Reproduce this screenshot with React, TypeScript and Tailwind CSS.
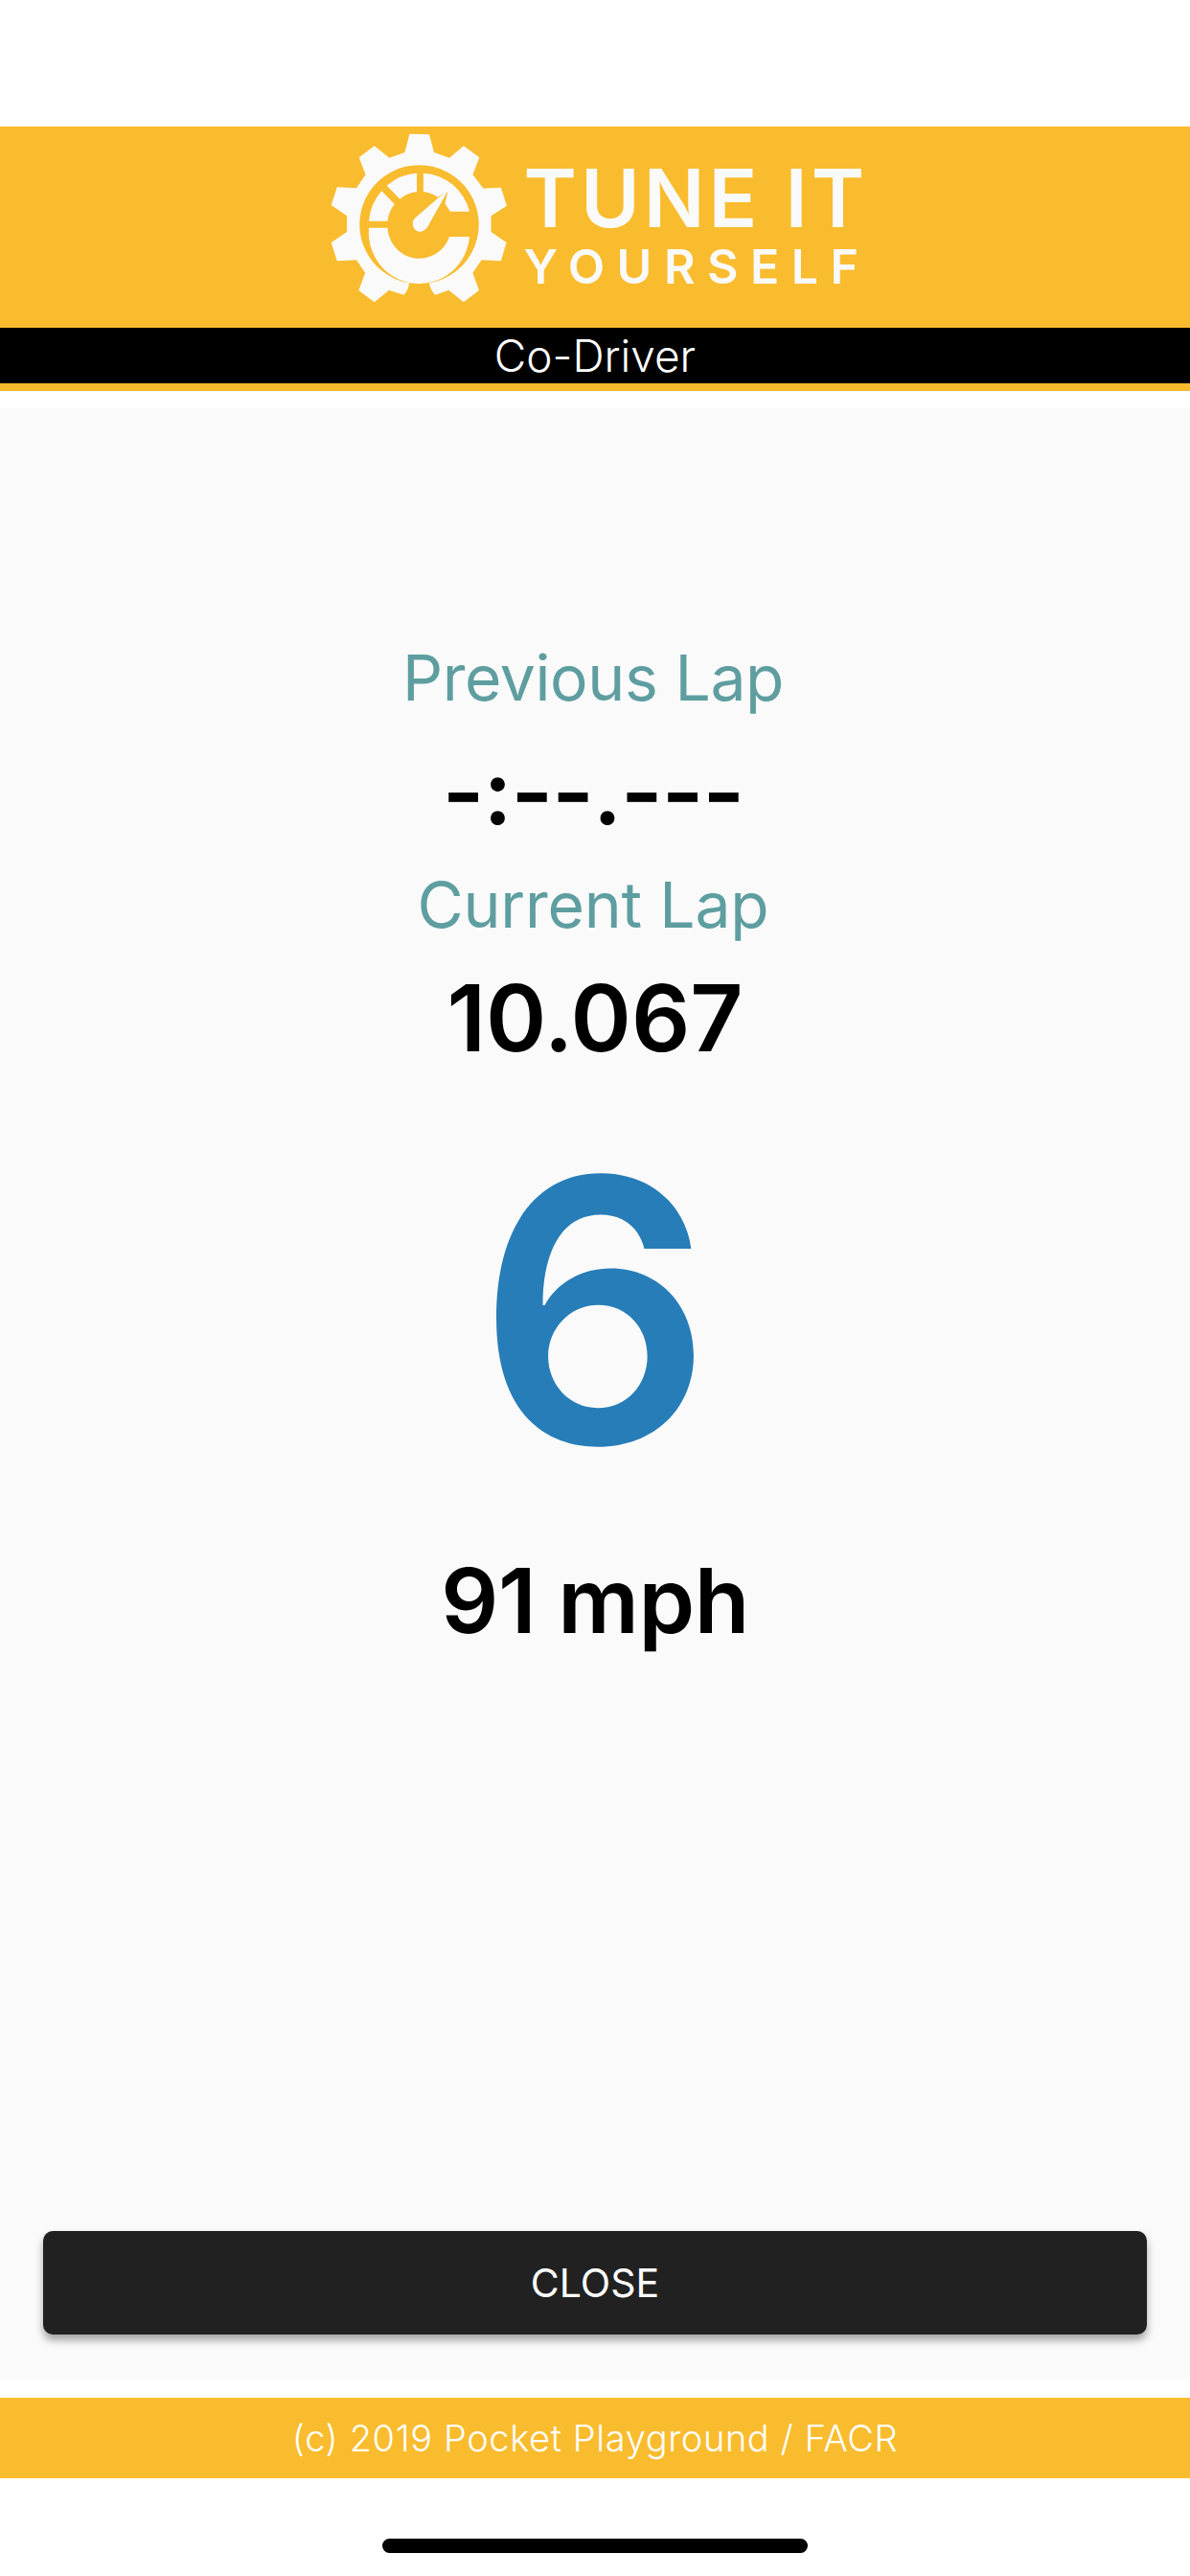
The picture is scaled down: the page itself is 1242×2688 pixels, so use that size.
const inter = { fontFamily: '"Inter", "Liberation Sans", sans-serif' };

// logo drawn in crop coordinates, stretched to the real size
function GearLogo() {
  return (
    <svg viewBox="60 55 495 540" preserveAspectRatio="none" className="h-[180px] w-[189px] shrink-0" fill="#fafafa">
      <path d="M281 60L335 62L348 118L390 135L429 98L472 134L454 188L483 231L531 228L547 285L504 317L504 367L546 400L531 458L478 455L454 495L471 550L429 587L388 549L352 564Q340 555 335 527A163 186 0 1 0 280 527Q280 545 266 564L225 549L185 587L142 550L160 495L136 455L83 458L67 400L110 367L110 317L67 283L83 227L136 230L161 188L143 134L185 98L226 135L268 118Z" />
      <path d="M170 354L221 354A87 102 0 0 0 390 382L445 382A137 160 0 0 1 170 354Z" />
      <path d="M170 333A137 160 0 0 1 205 239L240 280A87 102 0 0 0 221 333Z" />
      <path d="M219 222A137 160 0 0 1 301 183L301 241A87 102 0 0 0 255 264Z" />
      <path d="M319 183A137 160 0 0 1 445 303L392 303L378 278L386 240L358 258A87 102 0 0 0 319 241Z" />
      <path d="M386 238L330 352Q320 368 305 366Q288 360 290 335Q292 325 300 320L358 262Z" />
    </svg>
  );
}

export default function App() {
  return (
    <div className="flex h-[2688px] w-[1242px] flex-col bg-white" style={inter}>
      <div className="h-[132px]" />

      {/* Header */}
      <header className="bg-[#f9bc2e] pb-[8px]">
        <div className="flex h-[210px] items-start justify-center pl-[9px] pt-[6px]">
          <GearLogo />
          <div className="ml-[15px] flex flex-col text-[#fafafa]">
            <span className="mt-[27px] text-[84px] font-semibold leading-[84px] tracking-[4px] whitespace-nowrap">TUNE IT</span>
            <span className="mt-[4px] text-[50px] font-semibold leading-[50px] tracking-[12.5px] whitespace-nowrap">YOURSELF</span>
          </div>
        </div>
        <div className="flex h-[58px] items-center justify-center bg-black text-[46px] font-light leading-none text-white">
          Co-Driver
        </div>
      </header>

      <main className="mt-[18px] flex h-[2058px] flex-col items-center bg-[#fafafa] px-[45px] pt-[241px]">
        <p className="pr-[4px] text-[66px] leading-[80px] tracking-[-0.4px] text-[#5f9ea0]">Previous Lap</p>
        <p className="mt-[32px] pr-[4px] text-[94px] font-semibold leading-[94px] tracking-[-1px] text-black">-:--.---</p>
        <p className="mt-[31px] pr-[4px] text-[66px] leading-[80px] tracking-[-0.2px] text-[#5f9ea0]">Current Lap</p>
        <p className="mt-[31px] text-[96px] font-semibold leading-[94px] text-black">10.067</p>
        <p className="mt-[28px] text-[382px] font-semibold leading-[460px] text-[#277db8]">6</p>
        <p className="mt-[26px] text-[94px] font-semibold leading-[94px] tracking-[-0.5px] text-black">91 mph</p>

        <button className="mt-auto mb-[48px] flex h-[108px] w-full items-center justify-center rounded-[10px] bg-[#212121] pt-[2px] text-[41px] text-white shadow-[0_6px_8px_rgba(0,0,0,0.35)]">
          CLOSE
        </button>
      </main>

      <footer className="mt-[18px] flex h-[84px] items-center justify-center bg-[#f9bc2e] text-[38px] font-light tracking-[0.6px] text-white">
        (c) 2019 Pocket Playground / FACR
      </footer>

      <div className="flex flex-1 items-start justify-center pt-[63px]">
        <div className="h-[15px] w-[444px] rounded-full bg-black" />
      </div>
    </div>
  );
}
